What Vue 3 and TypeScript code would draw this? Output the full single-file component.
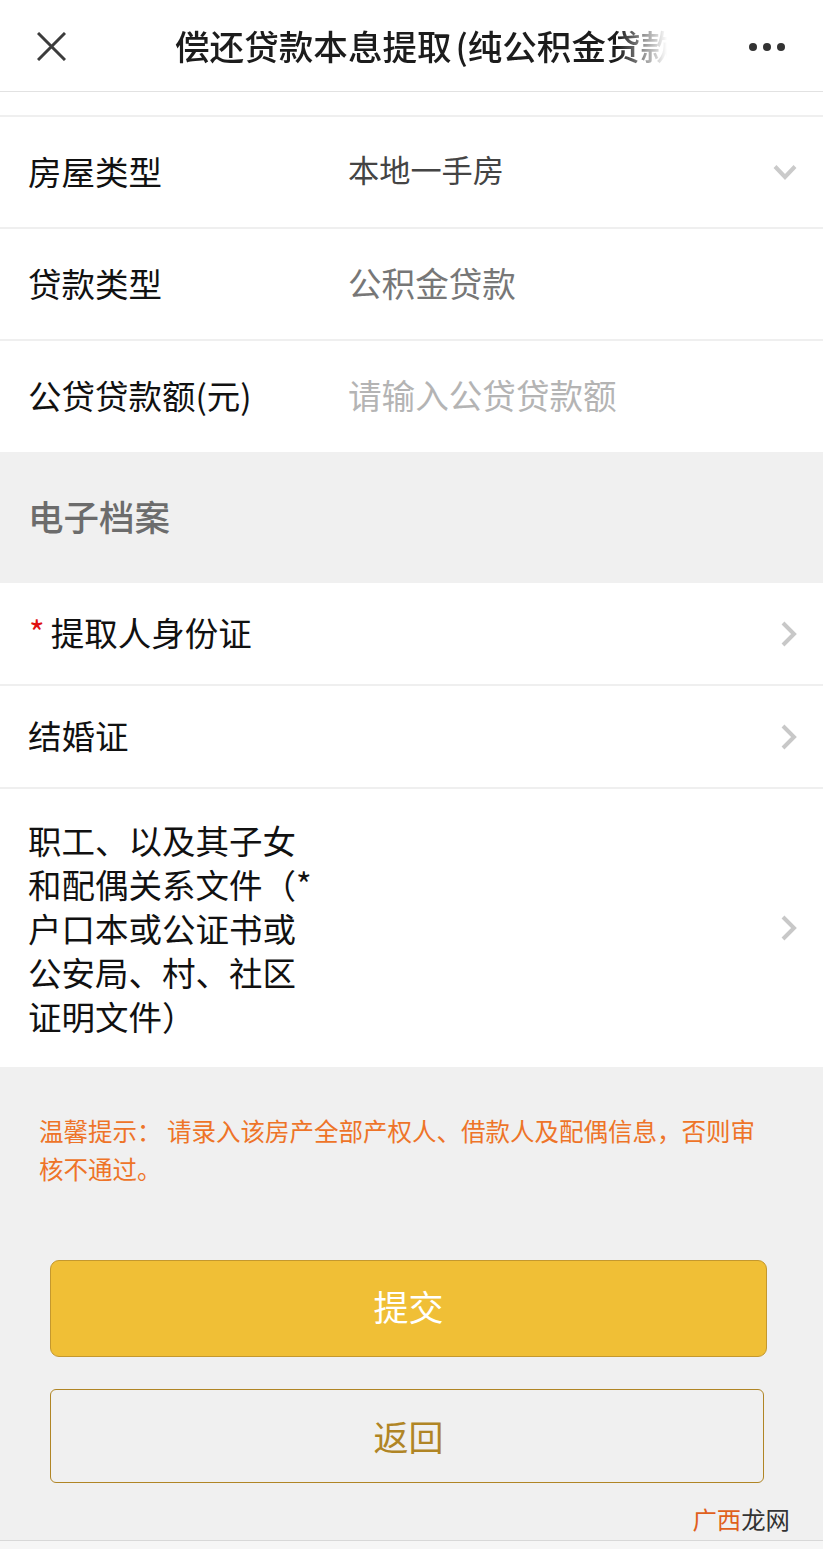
<script setup lang="ts">
const formRows = [
  { label: '房屋类型', value: '本地一手房', kind: 'select' },
  { label: '贷款类型', value: '公积金贷款', kind: 'fixed' },
  { label: '公贷贷款额(元)', value: '请输入公贷贷款额', kind: 'placeholder' },
]

const fileRows = [
  { label: '提取人身份证', required: true, size: 'one' },
  { label: '结婚证', required: false, size: 'two' },
  { label: '职工、以及其子女和配偶关系文件（*户口本或公证书或公安局、村、社区证明文件）', required: false, size: 'three' },
]
</script>

<template>
  <div class="page">
    <header class="topbar">
      <svg class="close" width="29" height="29" viewBox="0 0 29 29">
        <path d="M1 1 L28 28 M28 1 L1 28" stroke="#3c3c3c" stroke-width="3" fill="none" />
      </svg>
      <div class="title">偿还贷款本息提取 (纯公积金贷款)</div>
      <div class="dots"><i></i><i></i><i></i></div>
    </header>

    <div class="spacer"></div>

    <section class="form">
      <div v-for="row in formRows" :key="row.label" class="form-row">
        <div class="form-label">{{ row.label }}</div>
        <div class="form-value" :class="row.kind">{{ row.value }}</div>
        <svg v-if="row.kind === 'select'" class="down" width="24" height="16" viewBox="0 0 24 16">
          <path d="M2 2.5 L12 13 L22 2.5" stroke="#cacaca" stroke-width="4" fill="none" />
        </svg>
      </div>
    </section>

    <div class="section-title">电子档案</div>

    <section class="files">
      <div v-for="row in fileRows" :key="row.label" class="file-row" :class="row.size">
        <div class="file-label"><span v-if="row.required" class="star">*</span>{{ row.label }}</div>
        <svg class="arrow" width="18" height="26" viewBox="0 0 18 26">
          <path d="M3 2 L14 13 L3 24" stroke="#c8c8c8" stroke-width="4" fill="none" />
        </svg>
      </div>
    </section>

    <footer class="bottom">
      <p class="tip">温馨提示： 请录入该房产全部产权人、借款人及配偶信息，否则审核不通过。</p>
      <div class="btn primary">提交</div>
      <div class="btn secondary">返回</div>
      <div class="mark"><span>广西</span>龙网</div>
    </footer>
    <div class="tail"></div>
  </div>
</template>

<style scoped>
.page {
  width: 823px;
  height: 1549px;
  overflow: hidden;
  background: #fff;
  font-family: "Noto Sans CJK SC", "Liberation Sans", sans-serif;
  color: #111;
}

.topbar {
  height: 91px;
  display: flex;
  align-items: center;
  padding: 0 38px 0 37px;
  border-bottom: 1px solid #e2e2e2;
}
.close {
  flex: none;
  margin-top: 2px;
}
.title {
  width: 492px;
  margin-left: 109px;
  padding-bottom: 2px;
  white-space: nowrap;
  overflow: hidden;
  font-size: 34.6px;
  font-weight: 500;
  word-spacing: -4px;
  color: #1c1c1c;
  -webkit-mask-image: linear-gradient(to right, #000 90%, transparent 100%);
  mask-image: linear-gradient(to right, #000 90%, transparent 100%);
}
.dots {
  margin-left: auto;
  margin-top: 3px;
  display: flex;
  gap: 6px;
}
.dots i {
  width: 8px;
  height: 8px;
  border-radius: 50%;
  background: #333;
}

.spacer {
  height: 23px;
}

.form {
  border-top: 2px solid #efefef;
}
.form-row {
  height: 110px;
  display: flex;
  align-items: center;
  padding-left: 28px;
  border-bottom: 2px solid #efefef;
}
.form-row:last-child {
  height: 111px;
  border-bottom: 0;
}
.form-label {
  width: 320px;
  padding-bottom: 4px;
  font-size: 33.5px;
}
.form-value {
  padding-bottom: 4px;
  font-size: 33.6px;
}
.form-value.select {
  padding-bottom: 8px;
  font-size: 31.2px;
  color: #444;
}
.form-value.fixed {
  color: #777;
}
.form-value.placeholder {
  color: #b4b4b4;
}
.down {
  margin-left: auto;
  margin-right: 26px;
}

.section-title {
  height: 131px;
  display: flex;
  align-items: center;
  padding-left: 28px;
  padding-bottom: 4px;
  box-sizing: border-box;
  background: #f0f0f0;
  font-size: 35.5px;
  font-weight: 500;
  color: #6c6c6c;
}

.file-row {
  display: flex;
  align-items: center;
  justify-content: space-between;
  box-sizing: border-box;
  padding: 0 25px 0 28px;
  border-bottom: 2px solid #efefef;
  font-size: 33.5px;
}
.file-row.one,
.file-row.two {
  height: 103px;
}
.file-row.three {
  height: 278px;
  border-bottom: 0;
}
.file-label {
  width: 290px;
  line-height: 44px;
  padding-bottom: 4px;
}
.file-row.one .file-label {
  width: auto;
  margin-left: 1px;
}
.file-row.three .file-label {
  padding-bottom: 0;
}
.star {
  color: #e01010;
  margin-right: 6px;
}

.bottom {
  height: 474px;
  position: relative;
  background: #f0f0f0;
  border-bottom: 1px solid #d8d8d8;
  padding-top: 45px;
  box-sizing: border-box;
}
.tip {
  margin: 0;
  padding: 0 66px 0 39px;
  font-size: 24.5px;
  line-height: 38px;
  color: #ee7428;
}
.btn {
  box-sizing: border-box;
  display: flex;
  align-items: center;
  justify-content: center;
  font-size: 35px;
  border-radius: 9px;
  margin-left: 50px;
}
.primary {
  width: 717px;
  height: 97px;
  margin-top: 72px;
  padding-bottom: 6px;
  background: #f0bf36;
  border: 1px solid #c4982e;
  color: #fff;
}
.secondary {
  width: 714px;
  height: 94px;
  margin-top: 32px;
  padding: 0 0 2px 3px;
  border: 1px solid #b08525;
  border-radius: 6px;
  color: #b08525;
}
.mark {
  position: absolute;
  right: 33px;
  bottom: 0;
  font-size: 24.4px;
  line-height: 42px;
  color: #333;
}
.mark span {
  color: #e0601c;
}

.tail {
  height: 8px;
  background: #f6f6f6;
}
</style>
